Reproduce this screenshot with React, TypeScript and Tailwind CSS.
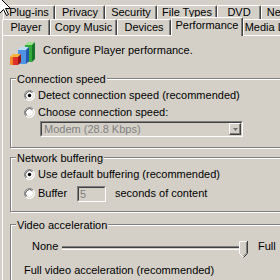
import React from "react";

function Tab({ className, children }: { className: string; children: React.ReactNode }) {
  return (
    <div
      className={
        "flex shrink-0 justify-center whitespace-nowrap rounded-t-[2px] border-l border-r border-t border-l-white border-t-white border-r-[#404040] shadow-[inset_-1px_0_#808080] " +
        className
      }
    >
      {children}
    </div>
  );
}

function Radio({ checked }: { checked?: boolean }) {
  return (
    <svg width="11" height="11" viewBox="0 0 12 12" className="shrink-0">
      <circle cx="6" cy="6" r="5.5" fill="#fff" />
      <path d="M2.11 9.89 A5.5 5.5 0 0 1 9.89 2.11" stroke="#808080" fill="none" />
      <path d="M2.82 9.18 A4.5 4.5 0 0 1 9.18 2.82" stroke="#404040" fill="none" />
      <path d="M9.89 2.11 A5.5 5.5 0 0 1 2.11 9.89" stroke="#ffffff" fill="none" />
      <path d="M9.18 2.82 A4.5 4.5 0 0 1 2.82 9.18" stroke="#d4d0c8" fill="none" />
      {checked && <circle cx="6" cy="6" r="1.9" fill="#000" />}
    </svg>
  );
}

function Group({ label, className, children }: { label: string; className: string; children: React.ReactNode }) {
  return (
    <div
      className={
        "ml-[7px] w-[280px] shrink-0 border border-[#808080] shadow-[inset_1px_1px_0_#fff,1px_1px_0_#fff] " + className
      }
    >
      <div className="-mt-[6px] ml-[5px] h-[13px] w-fit bg-[#d4d0c8] px-[1px]">{label}</div>
      {children}
    </div>
  );
}

function Icon() {
  return (
    <svg width="26" height="24" viewBox="0 0 26 24" className="shrink-0">
      <polygon points="15,3 18,0 25,0 22,3" fill="#9be28f" />
      <polygon points="15,3 22,3 22,20 15,20" fill="#34a83a" />
      <polygon points="22,3 25,0 25,17 22,20" fill="#17752a" />
      <polygon points="8,8 11,5 19,5 16,8" fill="#b9dcfb" />
      <polygon points="8,8 16,8 16,22 8,22" fill="#4f94e4" />
      <polygon points="16,8 19,5 19,19 16,22" fill="#2457b0" />
      <polygon points="0,15 3,12 11,12 8,15" fill="#f7b23a" />
      <polygon points="0,15 8,15 8,23 0,23" fill="#e0302a" />
      <polygon points="0,15 3,15 3,23 0,23" fill="#f08a2a" />
      <polygon points="8,15 11,12 11,20 8,23" fill="#9b1414" />
    </svg>
  );
}

function Cursor() {
  return (
    <svg width="13" height="20" viewBox="0 0 13 20" className="absolute left-[-1px] top-[-3px]">
      <polygon
        points="0.5,0.5 0.5,16.5 4.5,12.5 7.5,18.5 9.5,17.5 6.5,11.5 11.5,11.5"
        fill="#fff"
        stroke="#000"
        strokeWidth="1"
      />
    </svg>
  );
}

function Thumb() {
  return (
    <svg width="9" height="17" viewBox="0 0 9 17" className="-ml-[5px] mt-[1px] shrink-0">
      <polygon points="0,0 9,0 9,12 4.5,16.5 0,12" fill="#d4d0c8" />
      <path d="M0.5 12.5 V0.5 H8" stroke="#fff" fill="none" />
      <path d="M0.5 12.5 L4.5 16.5" stroke="#fff" fill="none" />
      <path d="M8.5 0 V12.5 L4.5 16.5" stroke="#404040" fill="none" />
      <path d="M7.5 1 V12 L4.5 15" stroke="#808080" fill="none" />
    </svg>
  );
}

export default function App() {
  return (
    <div className="relative h-[280px] w-[280px] overflow-hidden bg-[#d4d0c8] font-['Liberation_Sans_Narrow','Liberation_Sans',Arial,sans-serif] text-[11px] leading-[13px] text-black">
      <div className="pt-[5px]">
        <div className="flex h-[14px] pl-[3px]">
          <Tab className="w-[52px]">Plug-ins</Tab>
          <Tab className="w-[50px]">Privacy</Tab>
          <Tab className="w-[52px]">Security</Tab>
          <Tab className="w-[60px]">File Types</Tab>
          <Tab className="w-[44px]">DVD</Tab>
          <Tab className="w-[52px]">Network</Tab>
        </div>
        <div className="flex h-[16px] items-end pl-[2px]">
          <Tab className="h-[16px] w-[48px] pt-[1px]">Player</Tab>
          <Tab className="h-[16px] w-[67px] pt-[1px]">Copy Music</Tab>
          <Tab className="h-[16px] w-[54px] pt-[1px]">Devices</Tab>
          <div className="relative z-10 -mb-px flex h-[19px] w-[72px] shrink-0 justify-center rounded-t-[2px] border-l border-r border-t border-l-white border-t-white border-r-[#404040] bg-[#d4d0c8] pt-[1px] shadow-[inset_-1px_0_#808080]">
            Performance
          </div>
          <Tab className="h-[16px] w-[70px] pt-[1px]">Media Library</Tab>
        </div>
      </div>

      <div className="ml-[2px] flex h-[260px] flex-col border-l border-t border-white">
        <div className="flex pl-[7px] pt-[6px]">
          <Icon />
          <span className="ml-[7px] mt-[2px]">Configure Player performance.</span>
        </div>

        <Group label="Connection speed" className="mt-[12px] pb-[10px]">
          <div className="mt-[1px] flex h-[17px] items-center pl-[13px]">
            <Radio checked />
            <span className="ml-[3px]">Detect connection speed (recommended)</span>
          </div>
          <div className="flex h-[17px] items-center pl-[13px]">
            <Radio />
            <span className="ml-[3px]">Choose connection speed:</span>
          </div>
          <div className="ml-[29px] flex h-[16px] w-[203px] border border-[#808080] border-b-white border-r-white">
            <div className="flex flex-1 border border-[#404040] border-b-[#d4d0c8] border-r-[#d4d0c8]">
              <span className="flex-1 pl-[2px] leading-[12px] text-[#808080]">Modem (28.8 Kbps)</span>
              <div className="flex w-[12px] items-center justify-center border border-t-white border-l-white border-b-[#404040] border-r-[#404040] shadow-[inset_-1px_-1px_#808080]">
                <svg width="5" height="3" viewBox="0 0 5 3">
                  <polygon points="0,0 5,0 2.5,3" fill="#707070" />
                </svg>
              </div>
            </div>
          </div>
        </Group>

        <Group label="Network buffering" className="mt-[9px] pb-[9px]">
          <div className="mt-[1px] flex h-[17px] items-center pl-[13px]">
            <Radio checked />
            <span className="ml-[3px]">Use default buffering (recommended)</span>
          </div>
          <div className="mt-[2px] flex h-[17px] items-center pl-[13px]">
            <Radio />
            <span className="ml-[3px] w-[39px]">Buffer</span>
            <div className="flex h-[16px] w-[29px] border border-[#808080] border-b-white border-r-white">
              <div className="flex-1 border border-[#404040] border-b-[#d4d0c8] border-r-[#d4d0c8] pl-[1px] leading-[12px] text-[#808080]">
                5
              </div>
            </div>
            <span className="ml-[9px]">seconds of content</span>
          </div>
        </Group>

        <Group label="Video acceleration" className="mt-[12px] pb-[10px]">
          <div className="mt-[8px] flex h-[18px] items-start pl-[21px]">
            <span className="w-[30px]">None</span>
            <div className="mt-[6px] h-[4px] w-[182px] border-b border-t border-b-white border-t-[#808080] bg-[#d4d0c8] shadow-[inset_0_1px_#404040]" />
            <Thumb />
            <span className="ml-[10px]">Full</span>
          </div>
          <div className="mt-[6px] pl-[13px]">Full video acceleration (recommended)</div>
        </Group>
      </div>

      <Cursor />
    </div>
  );
}
